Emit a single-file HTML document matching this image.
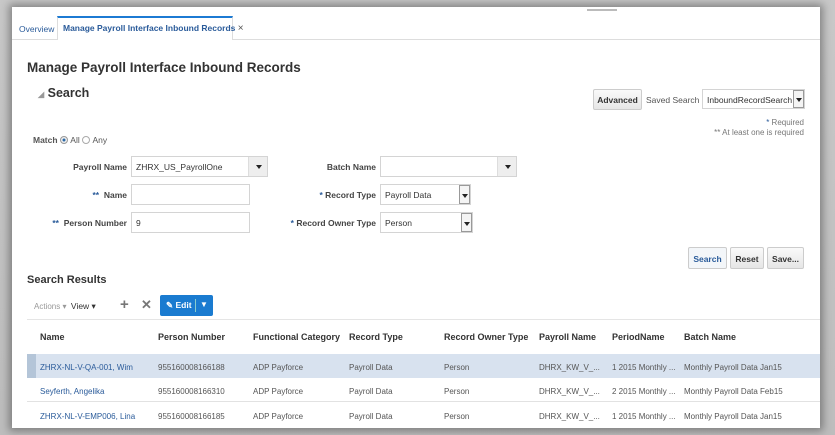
<!DOCTYPE html>
<html><head><meta charset="utf-8"><style>
*{box-sizing:border-box;margin:0;padding:0}
body{width:835px;height:435px;background:#9a9a9a;font-family:"Liberation Sans",Arial,sans-serif;overflow:hidden;position:relative;font-size:8.5px;color:#333}
.bg{position:absolute;left:0;top:0;width:835px;height:435px;background:linear-gradient(#c8c8c8,#bdbdbd)}
.page{position:absolute;left:12px;top:7px;width:808px;height:421px;background:#fff;box-shadow:0 0 8px 3px rgba(0,0,0,.35)}
.a{position:absolute;white-space:nowrap}
.lbl{color:#444;text-align:right}
.inp{position:absolute;border:1px solid #d4d4d4;background:#fff;height:21px;font-size:8.5px;padding:5px 4px;color:#333}
.dd{position:absolute;background:#eee;border-left:1px solid #ddd}
.tri{position:absolute;width:0;height:0;border-left:3px solid transparent;border-right:3px solid transparent;border-top:4px solid #222}
.btn{position:absolute;border:1px solid #ccc;background:linear-gradient(#fafafa,#e6e6e6);font-weight:bold;font-size:8.5px;text-align:center;border-radius:2px}
.blue{color:#2a5b9a}
.row{position:absolute;left:15px;width:793px;height:24px;border-bottom:1px solid #e2e2e2}
.h span{position:absolute;font-weight:bold;color:#333;font-size:9px}
</style></head><body>
<div class="bg"></div>
<div class="page">
 <div class="a" style="left:575px;top:2px;width:30px;height:2px;background:#bbb"></div>
 <div class="a" style="left:0;top:32px;width:808px;height:1px;background:#ddd"></div>
 <div class="a blue" style="left:7px;top:17px">Overview</div>
 <div class="a" style="left:45px;top:9px;width:176px;height:24px;border:1px solid #ddd;border-top:2px solid #1c7ad3;border-bottom:none;background:#fff"></div>
 <div class="a" style="left:51px;top:16px;color:#2a5b9a;font-weight:bold;font-size:8.5px">Manage Payroll Interface Inbound Records <span style="color:#555;font-weight:normal;font-size:10px">×</span></div>
 <div class="a" style="left:15px;top:53px;font-size:13.5px;font-weight:bold;color:#333">Manage Payroll Interface Inbound Records</div>
 <div class="a" style="left:26px;top:79px;font-size:12.5px;font-weight:bold;color:#333"><span style="color:#999;font-size:8px">◢</span> Search</div>
 <div class="a" style="left:21px;top:128px;font-weight:bold;color:#555">Match <span style="display:inline-block;width:8px;height:8px;border-radius:50%;border:1px solid #999;background:radial-gradient(#2a6aa8 30%,#eee 40%);vertical-align:-1px"></span> <span style="font-weight:normal">All</span> <span style="display:inline-block;width:8px;height:8px;border-radius:50%;border:1px solid #aaa;vertical-align:-1px"></span> <span style="font-weight:normal">Any</span></div>

 <div class="a lbl" style="right:693px;top:155px;font-weight:bold">Payroll Name</div>
 <div class="inp" style="left:119px;top:149px;width:137px">ZHRX_US_PayrollOne</div>
 <div class="dd" style="left:236px;top:150px;width:19px;height:19px"><div class="tri" style="left:7px;top:8px"></div></div>
 <div class="a lbl" style="right:693px;top:183px;font-weight:bold"><span class="blue">**</span>&nbsp; Name</div>
 <div class="inp" style="left:119px;top:177px;width:119px"></div>
 <div class="a lbl" style="right:693px;top:211px;font-weight:bold"><span class="blue">**</span>&nbsp; Person Number</div>
 <div class="inp" style="left:119px;top:205px;width:119px">9</div>

 <div class="a lbl" style="right:444px;top:155px;font-weight:bold">Batch Name</div>
 <div class="inp" style="left:368px;top:149px;width:137px"></div>
 <div class="dd" style="left:485px;top:150px;width:19px;height:19px"><div class="tri" style="left:7px;top:8px"></div></div>
 <div class="a lbl" style="right:444px;top:183px;font-weight:bold"><span class="blue">*</span> Record Type</div>
 <div class="inp" style="left:368px;top:177px;width:91px">Payroll Data</div>
 <div class="dd" style="left:447px;top:178px;width:11px;height:19px;border:1px solid #999;background:#f4f4f4"><div class="tri" style="left:2px;top:8px"></div></div>
 <div class="a lbl" style="right:444px;top:211px;font-weight:bold"><span class="blue">*</span> Record Owner Type</div>
 <div class="inp" style="left:368px;top:205px;width:93px">Person</div>
 <div class="dd" style="left:449px;top:206px;width:11px;height:19px;border:1px solid #999;background:#f4f4f4"><div class="tri" style="left:2px;top:8px"></div></div>

 <div class="btn" style="left:581px;top:82px;width:49px;height:21px;padding-top:5px">Advanced</div>
 <div class="a" style="left:634px;top:88px;color:#555">Saved Search</div>
 <div class="inp" style="left:690px;top:82px;width:103px;height:20px">InboundRecordSearch</div>
 <div class="dd" style="left:781px;top:83px;width:11px;height:18px;border:1px solid #999;background:#f4f4f4"><div class="tri" style="left:2px;top:7px"></div></div>
 <div class="a" style="right:16px;top:111px;color:#777;text-align:right;font-size:8px;line-height:10px"><span class="blue">*</span> Required<br>** At least one is required</div>

 <div class="btn blue" style="left:676px;top:240px;width:39px;height:22px;padding-top:6px;background:#f3f6f9">Search</div>
 <div class="btn" style="left:718px;top:240px;width:34px;height:22px;padding-top:6px">Reset</div>
 <div class="btn" style="left:755px;top:240px;width:37px;height:22px;padding-top:6px">Save...</div>

 <div class="a" style="left:15px;top:267px;font-size:11px;font-weight:bold;color:#333">Search Results</div>
 <div class="a" style="left:22px;top:294px;color:#999;font-size:8px">Actions ▾ &nbsp;<span style="color:#333;font-size:8.5px">View ▾</span></div>
 <div class="a" style="left:108px;top:289px;font-size:15px;font-weight:bold;color:#777">+</div>
 <div class="a" style="left:129px;top:290px;font-size:13px;font-weight:bold;color:#777">✕</div>
 <div class="a" style="left:148px;top:288px;width:53px;height:21px;background:#1a7bd0;border-radius:2px;color:#fff;font-weight:bold;padding:5px 0 0 6px">✎ Edit<span style="position:absolute;left:35px;top:4px;width:1px;height:13px;background:#8cc"></span><span style="position:absolute;left:40px;top:5px;font-size:8px">▼</span></div>

 <div class="a" style="left:15px;top:312px;width:793px;height:1px;background:#e5e5e5"></div>
 <div class="h"><span style="left:28px;top:325px">Name</span><span style="left:146px;top:325px">Person Number</span><span style="left:241px;top:325px">Functional Category</span><span style="left:337px;top:325px">Record Type</span><span style="left:432px;top:325px">Record Owner Type</span><span style="left:527px;top:325px">Payroll Name</span><span style="left:600px;top:325px">PeriodName</span><span style="left:672px;top:325px">Batch Name</span></div>
 <div class="row" style="top:347px;background:#d8e2ef;border:none"><div style="position:absolute;left:0;top:0;width:9px;height:24px;background:#b4c5d8"></div></div>
 <div class="row" style="top:371px"></div>
 <div class="row" style="top:396px;border:none"></div>
 <div style="position:absolute;left:0;top:347px;width:808px;font-size:8px;color:#555">
  <div class="a" style="top:9px;left:28px;color:#2a5b9a">ZHRX-NL-V-QA-001, Wim</div><div class="a" style="top:9px;left:146px">955160008166188</div><div class="a" style="top:9px;left:241px">ADP Payforce</div><div class="a" style="top:9px;left:337px">Payroll Data</div><div class="a" style="top:9px;left:432px">Person</div><div class="a" style="top:9px;left:527px">DHRX_KW_V_...</div><div class="a" style="top:9px;left:600px">1 2015 Monthly ...</div><div class="a" style="top:9px;left:672px">Monthly Payroll Data Jan15</div>
  <div class="a" style="top:33px;left:28px;color:#2a5b9a">Seyferth, Angelika</div><div class="a" style="top:33px;left:146px">955160008166310</div><div class="a" style="top:33px;left:241px">ADP Payforce</div><div class="a" style="top:33px;left:337px">Payroll Data</div><div class="a" style="top:33px;left:432px">Person</div><div class="a" style="top:33px;left:527px">DHRX_KW_V_...</div><div class="a" style="top:33px;left:600px">2 2015 Monthly ...</div><div class="a" style="top:33px;left:672px">Monthly Payroll Data Feb15</div>
  <div class="a" style="top:58px;left:28px;color:#2a5b9a">ZHRX-NL-V-EMP006, Lina</div><div class="a" style="top:58px;left:146px">955160008166185</div><div class="a" style="top:58px;left:241px">ADP Payforce</div><div class="a" style="top:58px;left:337px">Payroll Data</div><div class="a" style="top:58px;left:432px">Person</div><div class="a" style="top:58px;left:527px">DHRX_KW_V_...</div><div class="a" style="top:58px;left:600px">1 2015 Monthly ...</div><div class="a" style="top:58px;left:672px">Monthly Payroll Data Jan15</div>
 </div>
</div>
</body></html>
